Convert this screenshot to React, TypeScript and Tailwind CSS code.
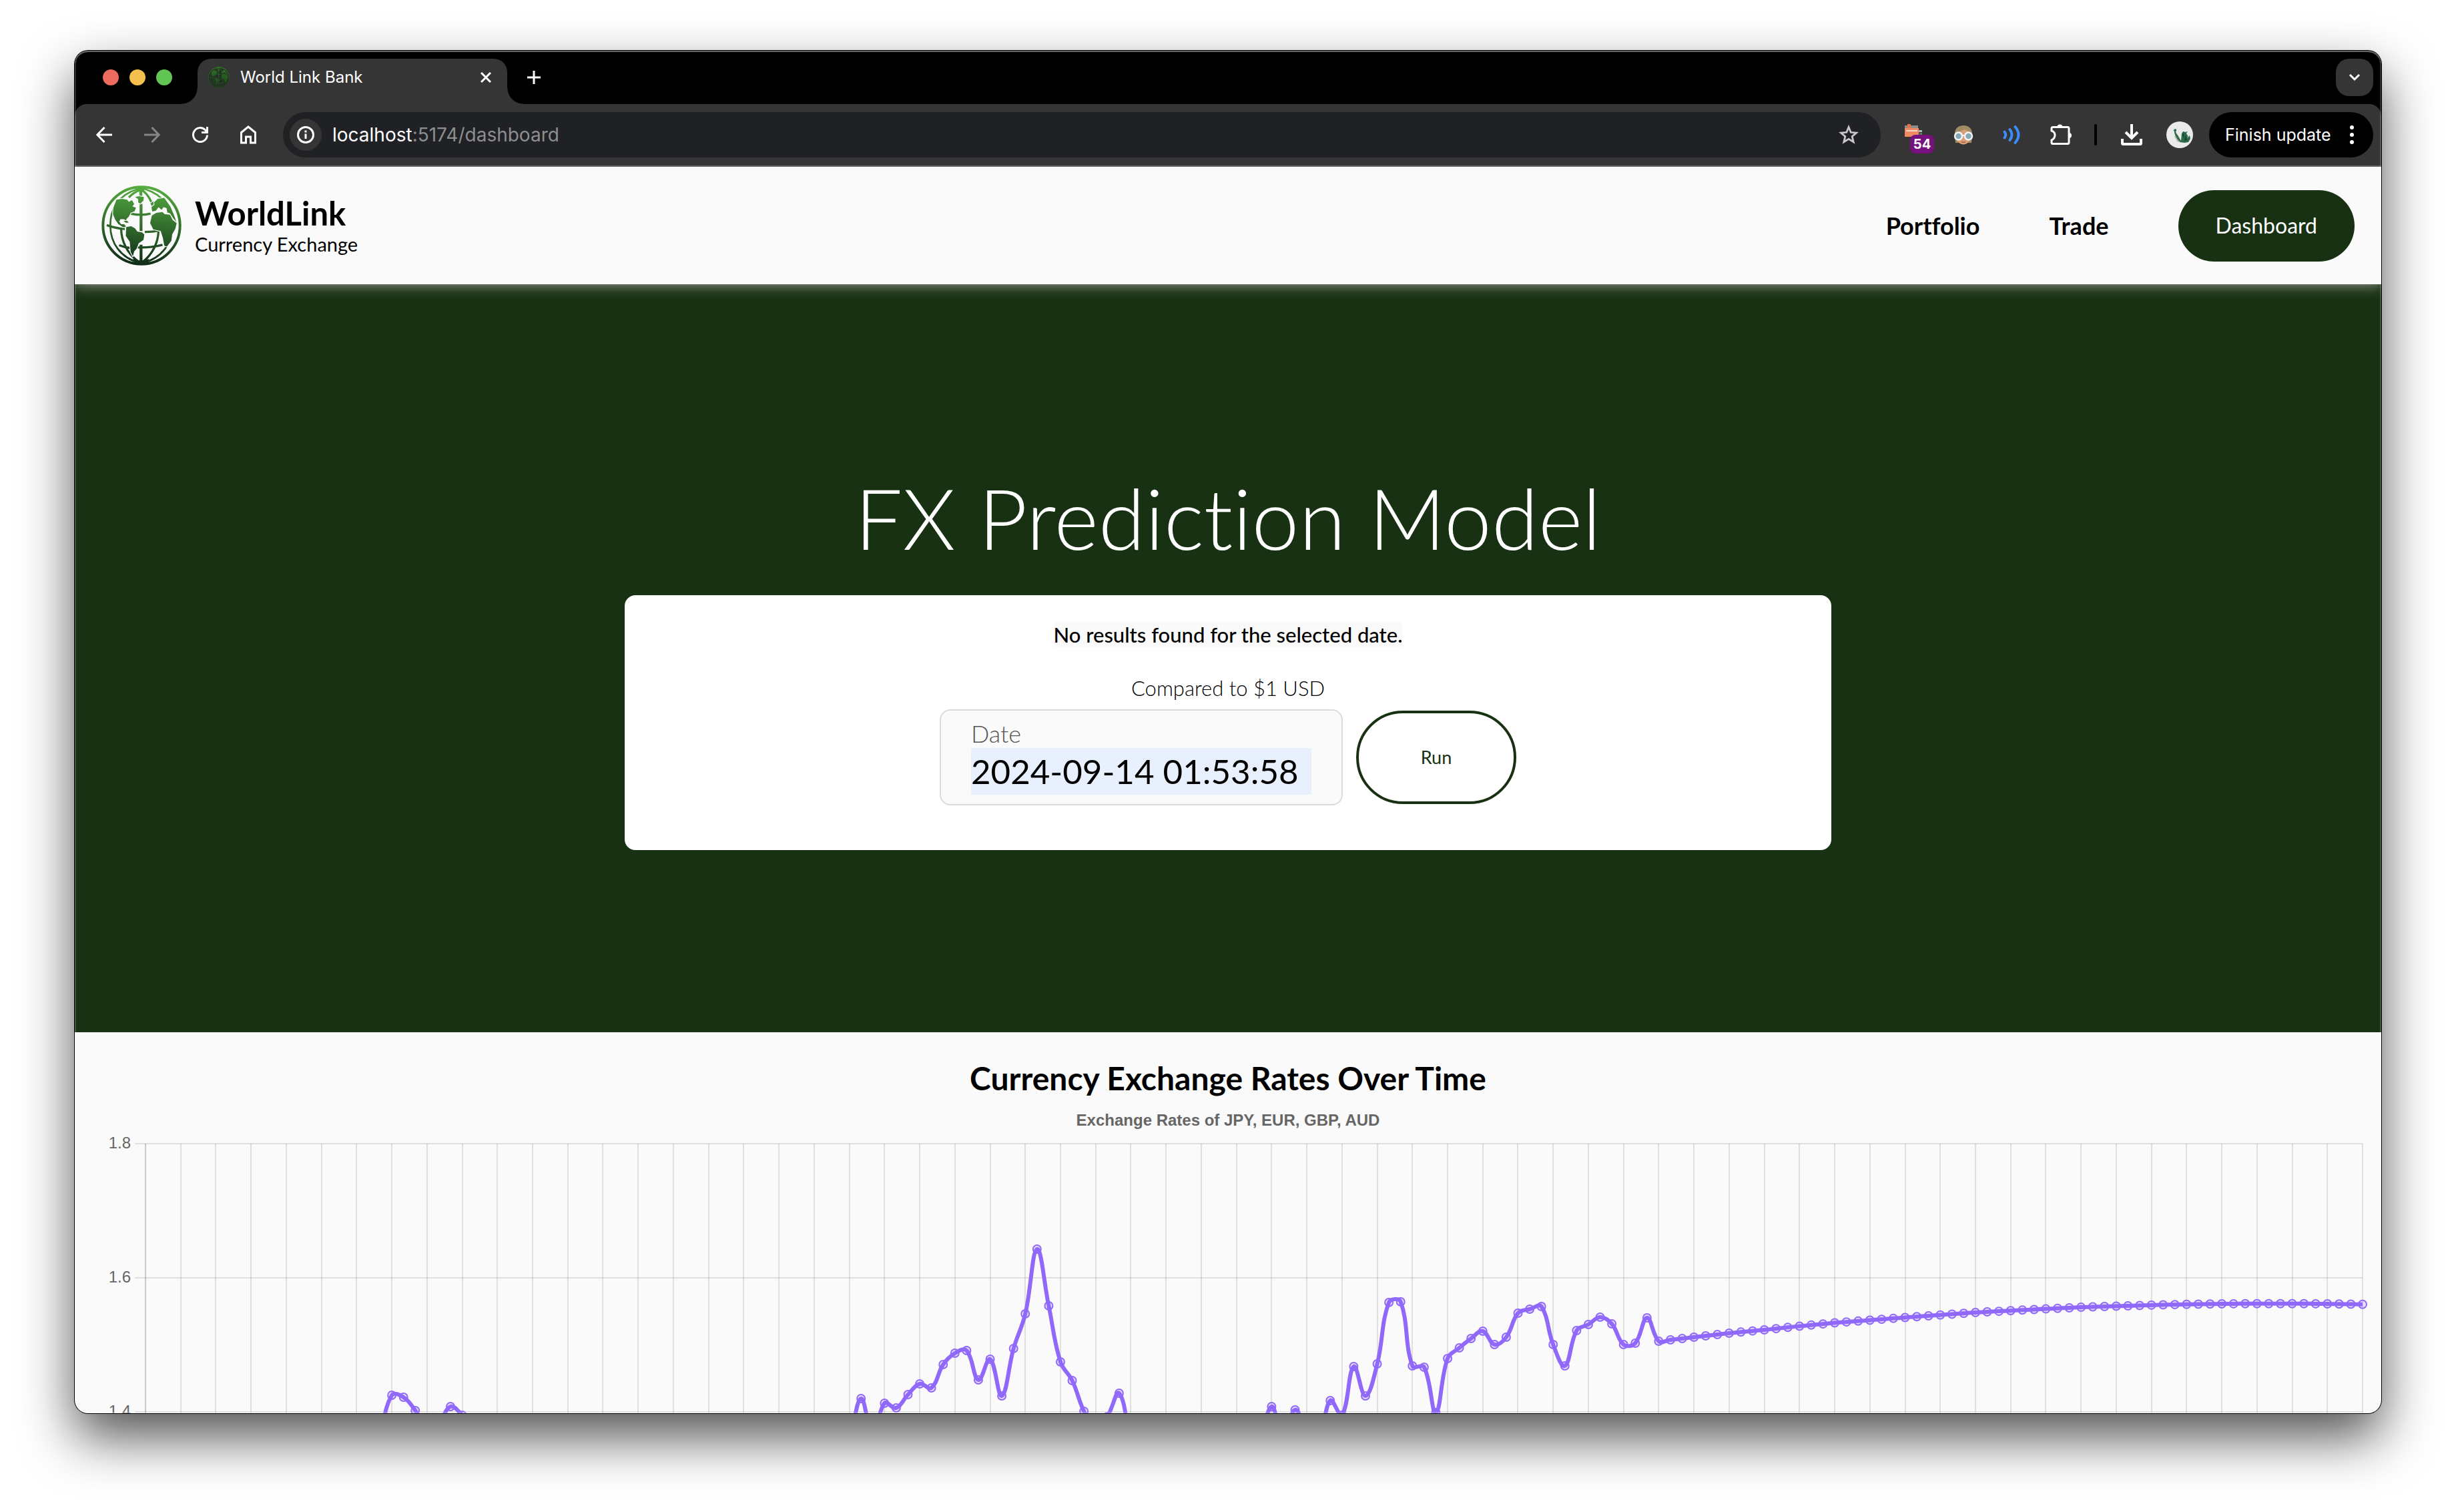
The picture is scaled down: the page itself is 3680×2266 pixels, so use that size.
import { useId } from "react";
import type { ReactNode } from "react";

/* ---------- chart data: [index on the x axis, pixel height of the sample] ---------- */

const POINT_COUNT = 190;
const PLOT_LEFT = 106;
const PLOT_RIGHT = 3428;
const PLOT_TOP = 21;
const STEP = (PLOT_RIGHT - PLOT_LEFT) / (POINT_COUNT - 1);
const TICKS = ["1.8", "1.6", "1.4"];
const TICK_GAP = 201;

const RISES: [number, number][][] = [
  [[19, 530], [20, 460], [21, 398], [22, 401], [23, 421], [24, 450], [25, 440], [26, 415], [27, 428], [28, 450], [29, 500]],
  [
    [59, 520], [60, 470], [61, 403], [62, 458], [63, 410], [64, 417], [65, 397], [66, 381], [67, 387], [68, 352],
    [69, 335], [70, 331], [71, 375], [72, 344], [73, 399], [74, 328], [75, 276], [76, 179], [77, 264], [78, 348],
    [79, 376], [80, 422], [81, 450], [82, 430], [83, 395], [84, 470], [85, 540],
  ],
  [
    [94, 540], [95, 475], [96, 415], [97, 460], [98, 420], [99, 450], [100, 465], [101, 406], [102, 428], [103, 355],
    [104, 399], [105, 351], [106, 259], [107, 258], [108, 354], [109, 356], [110, 424], [111, 343], [112, 327],
    [113, 313], [114, 302], [115, 322], [116, 311], [117, 275], [118, 269], [119, 265], [120, 322], [121, 354],
    [122, 301], [123, 292], [124, 281], [125, 291], [126, 322], [127, 320], [128, 282], [129, 317],
  ],
];

const FORECAST: [number, number][] = [
  [129, 317], [132, 311], [135, 305], [138, 300], [141, 294.5], [144, 289.5], [147, 285.5], [150, 281.5], [153, 277.7],
  [156, 274], [159, 271.2], [162, 268.6], [165, 266.1], [168, 264.5], [171, 262.9], [174, 261.8], [177, 261],
  [180, 260.7], [183, 260.7], [186, 261], [189, 261.8],
];

function densify(rows: [number, number][]): [number, number][] {
  const out: [number, number][] = [];
  for (let k = 0; k < rows.length - 1; k++) {
    const [i0, y0] = rows[k];
    const [i1, y1] = rows[k + 1];
    for (let i = i0 + 1; i <= i1; i++) out.push([i, y0 + ((y1 - y0) * (i - i0)) / (i1 - i0)]);
  }
  return out;
}

const SERIES: [number, number][][] = [RISES[0], RISES[1], [...RISES[2], ...densify(FORECAST)]];

const xOf = (i: number) => PLOT_LEFT + STEP * i;

function smoothPath(rows: [number, number][], tension = 0.4) {
  const p = rows.map(([i, y]) => ({ x: xOf(i), y }));
  const ctl = p.map((cur, k) => {
    const prev = p[k - 1] ?? cur;
    const next = p[k + 1] ?? cur;
    const a = Math.hypot(cur.x - prev.x, cur.y - prev.y);
    const b = Math.hypot(next.x - cur.x, next.y - cur.y);
    const fa = (tension * a) / (a + b || 1);
    const fb = (tension * b) / (a + b || 1);
    const dx = next.x - prev.x;
    const dy = next.y - prev.y;
    return { px: cur.x - fa * dx, py: cur.y - fa * dy, nx: cur.x + fb * dx, ny: cur.y + fb * dy };
  });
  let d = `M${p[0].x.toFixed(1)} ${p[0].y.toFixed(1)}`;
  for (let k = 1; k < p.length; k++) {
    const c0 = ctl[k - 1];
    const c1 = ctl[k];
    d += `C${c0.nx.toFixed(1)} ${c0.ny.toFixed(1)} ${c1.px.toFixed(1)} ${c1.py.toFixed(1)} ${p[k].x.toFixed(1)} ${p[k].y.toFixed(1)}`;
  }
  return d;
}

function RatesChart() {
  const columns = Array.from({ length: 64 }, (_, k) => Math.round(xOf(k * 3)));
  return (
    <svg viewBox="0 0 3456 640" className="block w-full shrink-0" role="img" aria-label="Line chart of exchange rates over time">
      <g fill="none" stroke="#000000" strokeOpacity="0.1" strokeWidth="2">
        {columns.map((x) => (
          <path key={x} d={`M${x} ${PLOT_TOP}V640`} />
        ))}
        <path d={`M${PLOT_LEFT} ${PLOT_TOP}V640`} />
        {TICKS.map((t, k) => (
          <path key={t} d={`M90 ${PLOT_TOP + k * TICK_GAP}H${PLOT_RIGHT}`} />
        ))}
      </g>
      <g className="fill-[#666666] text-2xl [font-family:'Liberation_Sans',Arial,sans-serif]" textAnchor="end">
        {TICKS.map((t, k) => (
          <text key={t} x="84" y={PLOT_TOP + 7 + k * TICK_GAP}>
            {t}
          </text>
        ))}
      </g>
      {SERIES.map((rows, s) => (
        <g key={s} stroke="#9068fa" fill="none">
          <path d={smoothPath(rows)} strokeWidth="6" strokeLinejoin="round" />
          {rows.map(([i, y], k) => (
            <circle key={k} cx={xOf(i)} cy={y} r="6" strokeWidth="2" fill="#9068fa" fillOpacity="0.2" />
          ))}
        </g>
      ))}
    </svg>
  );
}

/* ---------- brand ---------- */

function Globe({ className, top, bottom, gap }: { className: string; top: string; bottom: string; gap: string }) {
  const id = useId();
  const paint = `url(#${id})`;
  return (
    <svg viewBox="36 52 362 362" className={className} aria-hidden="true">
      <defs>
        <linearGradient id={id} gradientUnits="userSpaceOnUse" x1="230" y1="55" x2="205" y2="412">
          <stop offset="0" stopColor={top} />
          <stop offset="1" stopColor={bottom} />
        </linearGradient>
      </defs>
      <circle cx="217" cy="233" r="174" fill={gap} stroke={paint} strokeWidth="12" />
      <g fill="none" stroke={paint} strokeWidth="10">
        <path d="M214 62V108M215 135V258M215 320V408" strokeWidth="13" />
        <path d="M200 68C110 96 76 160 76 232C76 310 120 380 214 404" strokeWidth="8" />
        <path d="M232 68C320 96 358 160 360 232C358 310 310 382 218 404" strokeWidth="8" />
        <path d="M214 70C190 80 172 92 160 106M214 70C236 82 252 104 262 128" />
        <path d="M168 179Q214 190 258 179" />
        <path d="M60 231Q100 246 142 248M232 262Q268 262 300 255" />
        <path d="M125 248C126 300 150 360 206 398" />
        <path d="M294 258C292 310 268 362 222 398" />
        <path d="M116 322Q140 332 166 334M200 332Q262 334 312 320" />
      </g>
      <path d="M190 60L214 56L242 60L218 84H210ZM178 384L214 392L252 384L240 410H192Z" fill={paint} />
      <g fill={paint} stroke={gap} strokeWidth="7" strokeLinejoin="round" paintOrder="stroke">
        <path d="M104 116L128 112L152 116L160 126L174 118L184 136L176 146L192 152L186 168L168 176L160 192L148 204L150 212L138 204L122 204L116 214L124 226L140 228L148 240L132 240L112 226L98 206L88 182L90 152Z" />
        <path d="M188 104L206 100L228 104L226 120L212 134L202 128L202 114Z" />
        <path d="M136 212L152 212L160 220L146 220Z" />
        <path d="M148 240L170 236L188 246L198 260L220 264L230 274L226 298L204 314L196 336L184 350L178 372L168 352L164 306L146 280Z" />
        <path d="M264 188L284 176L312 172L322 182L346 184L358 208L376 222L370 248L356 272L352 302L332 328L320 324L314 290L304 258L270 250L256 222Z" />
        <path d="M262 152L272 130L290 112L320 108L348 148L368 196L374 216L362 202L346 178L334 174L330 154L316 150L308 162L294 150L282 166L266 170Z" />
        <path d="M258 132L270 124L272 138L262 144Z" />
      </g>
    </svg>
  );
}

/* ---------- browser chrome ---------- */

function IconButton({ label, className = "", children }: { label: string; className?: string; children: ReactNode }) {
  return (
    <button type="button" aria-label={label} className={`flex size-12 shrink-0 items-center justify-center ${className}`}>
      {children}
    </button>
  );
}

function TabStrip() {
  return (
    <div className="flex h-20 shrink-0 items-center bg-black pr-3 pl-[42px]">
      <div className="flex gap-4">
        <button type="button" aria-label="Close window" className="size-6 rounded-full bg-[#ec6a5e]" />
        <button type="button" aria-label="Minimize window" className="size-6 rounded-full bg-[#f4bf4f]" />
        <button type="button" aria-label="Zoom window" className="size-6 rounded-full bg-[#61c554]" />
      </div>
      <div className="relative ml-[38px] flex h-[68px] w-[464px] items-center self-end rounded-t-[20px] bg-[#353535] pr-6 pb-3 pl-4">
        <span className="absolute bottom-0 -left-6 size-6 bg-[radial-gradient(circle_at_0_0,transparent_23px,#353535_24px)]" />
        <span className="absolute -right-6 bottom-0 size-6 bg-[radial-gradient(circle_at_100%_0,transparent_23px,#353535_24px)]" />
        <Globe className="size-8" top="#2f7526" bottom="#1d3d1f" gap="#232d22" />
        <span className="ml-4 flex-1 text-2xl leading-7 text-white">World Link Bank</span>
        <button type="button" aria-label="Close tab">
          <svg viewBox="0 0 16 16" className="size-4" fill="none" stroke="#fff" strokeWidth="3">
            <path d="M1 1L15 15M15 1L1 15" />
          </svg>
        </button>
      </div>
      <button type="button" aria-label="New tab" className="ml-[30px]">
        <svg viewBox="0 0 20 20" className="size-5" fill="none" stroke="#fff" strokeWidth="3">
          <path d="M10 0V20M0 10H20" />
        </svg>
      </button>
      <button type="button" aria-label="Search tabs" className="ml-auto flex size-14 items-center justify-center rounded-[20px] bg-[#353535]">
        <svg viewBox="0 0 18 12" className="h-3 w-[18px]" fill="none" stroke="#fff" strokeWidth="3">
          <path d="M2 2L9 9L16 2" />
        </svg>
      </button>
    </div>
  );
}

function Toolbar() {
  return (
    <div className="shrink-0 bg-black">
      <div className="flex h-[94px] items-center rounded-t-[18px] border-b-2 border-[#676767] bg-[#353535] pr-3 pl-5">
        <div className="flex gap-6">
          <IconButton label="Back">
            <svg viewBox="0 0 24 24" className="size-6" fill="none" stroke="#fff" strokeWidth="3">
              <path d="M24 12H2M12.500 1L1.800 12L12.500 23" />
            </svg>
          </IconButton>
          <IconButton label="Forward">
            <svg viewBox="0 0 24 24" className="size-6" fill="none" stroke="#868686" strokeWidth="3">
              <path d="M0 12H22M11.500 1L22.200 12L11.500 23" />
            </svg>
          </IconButton>
          <IconButton label="Reload">
            <svg viewBox="0 0 24 24" className="size-6" fill="none" stroke="#fff" strokeWidth="3">
              <path d="M22.500 12.500A10.500 10.500 0 1 1 19.500 4.700L22 7.500M22.500 0V8.500H14" />
            </svg>
          </IconButton>
          <IconButton label="Home">
            <svg viewBox="0 0 24 28" className="h-7 w-6" fill="none" stroke="#fff" strokeWidth="3">
              <path d="M1.500 26V10.500L12 2L22.500 10.500V26H15.500V17H8.500V26Z" />
            </svg>
          </IconButton>
        </div>
        <div className="ml-7 flex h-[68px] flex-1 items-center rounded-full bg-[#202125] pr-[33px] pl-[10px]">
          <IconButton label="View site information" className="rounded-full bg-[#353535]">
            <svg viewBox="0 0 26 26" className="size-[26px]" fill="none" stroke="#fff" strokeWidth="3">
              <circle cx="13" cy="13" r="11.500" />
              <path d="M13 11.500V19M13 6.500V9.500" />
            </svg>
          </IconButton>
          <div className="ml-4 flex-1 text-[28px] leading-9 text-[#8d8e90]">
            <span className="text-white">localhost</span>:5174/dashboard
          </div>
          <button type="button" aria-label="Bookmark this tab">
            <svg viewBox="0 0 30 30" className="size-[30px]" fill="none" stroke="#c7c8ca" strokeWidth="2.800">
              <path d="M15 3.500L18.200 11.300L26.600 12L20.200 17.500L22.200 25.700L15 21.300L7.800 25.700L9.800 17.500L3.400 12L11.800 11.300Z" />
            </svg>
          </button>
        </div>

        <button type="button" aria-label="Tab manager, 54 tabs" className="relative ml-8 h-12 w-12 shrink-0">
          <svg viewBox="0 0 48 48" className="size-12" aria-hidden="true">
            <path d="M4 10H24V14H4Z" fill="#8d8d8d" />
            <path d="M8 8H13V14H8Z" fill="#e8704a" />
            <path d="M4 14H25V27H4Z" fill="#ef8a63" />
            <path d="M6 17H23V19H6Z" fill="#f8d8c8" />
            <path d="M25 17H30V20H25Z" fill="#a9b9ad" />
            <path d="M26 21H30V24H26Z" fill="#5c7a66" />
          </svg>
          <span className="absolute top-6 left-3 flex h-7 w-9 items-center justify-center rounded-lg bg-[#76127e] text-xl leading-7 font-bold text-white">
            54
          </span>
        </button>
        <IconButton label="Reader extension" className="ml-5">
          <svg viewBox="0 0 32 32" className="size-8">
            <path d="M3 17C2 7 8 2 16 2S30 7 29 17L28 28H4Z" fill="#a08b62" />
            <path d="M5 16C6 12 10 11 18 8C22 10 26 12 27 16C27 25 22 30.500 16 30.500S5 25 5 16Z" fill="#d9a077" />
            <circle cx="8.500" cy="18" r="5.500" fill="#86a9b8" stroke="#f4f7f8" strokeWidth="2.400" />
            <circle cx="23.500" cy="18" r="5.500" fill="#86a9b8" stroke="#f4f7f8" strokeWidth="2.400" />
            <path d="M14 17H18" stroke="#f4f7f8" strokeWidth="2" />
            <path d="M13 26.500Q16 28 19 26.500" fill="none" stroke="#a8633f" strokeWidth="1.500" />
          </svg>
        </IconButton>
        <IconButton label="Read aloud extension" className="ml-6">
          <svg viewBox="0 0 26 28" className="h-7 w-[26px]" fill="none" stroke="#3b8cf5" strokeWidth="4" strokeLinecap="round">
            <path d="M2.500 9.500Q6 14 2.500 18.500M10.500 6Q16.500 14 10.500 22M18.500 2Q28.500 14 18.500 26" />
          </svg>
        </IconButton>
        <IconButton label="Extensions" className="ml-[26px]">
          <svg viewBox="0 0 32 32" className="size-8">
            <path
              d="M2 9V6.500Q2 4.500 4 4.500H26Q28 4.500 28 6.500V27.500Q28 29.500 26 29.500H4Q2 29.500 2 27.500V24Q7 21.500 7 16.500T2 10Z"
              fill="none"
              stroke="#fff"
              strokeWidth="3"
            />
            <path d="M10.500 4.500A4 4 0 0 1 18.500 4.500ZM28 13A4 4 0 0 1 28 21Z" fill="#fff" />
          </svg>
        </IconButton>
        <span className="ml-[26px] h-8 w-1 shrink-0 rounded-sm bg-black" />
        <IconButton label="Downloads" className="ml-7">
          <svg viewBox="0 0 32 32" className="size-8" fill="none" stroke="#fff" strokeWidth="4">
            <path d="M16 0V21M7 12L16 21L25 12M2 22V28.500Q2 30 3.500 30H28.500Q30 30 30 28.500V22" />
          </svg>
        </IconButton>
        <button type="button" aria-label="Profile" className="ml-7 size-10 shrink-0">
          <svg viewBox="0 0 40 40" className="size-10">
            <circle cx="20" cy="20" r="20" fill="#e9eae9" />
            <path d="M12 22L15 21L18 27L22 32L16 30Z" fill="#b4bab5" />
            <path
              d="M10.500 14L12 11.500L15 11.500L15 14L14 15.500C14.500 18 17 20 19 24L22 29L23 18L25 15L29 16L32 14.500L30 18L32.500 22L31 25L35 21L36 26L33 31L27 32L21 31C17 28 15 24 13 20C12 18 12 16 12 14.500Z"
              fill="#2c6a49"
            />
            <path d="M24 20L26 17L27 26ZM29 21L31 28L27 29Z" fill="#174630" />
          </svg>
        </button>
        <button
          type="button"
          className="ml-6 flex h-[68px] w-[246px] shrink-0 items-center justify-between rounded-full bg-black pr-[29px] pl-6 text-[25px] leading-8 whitespace-nowrap text-white"
        >
          Finish update
          <svg viewBox="0 0 6 28" className="h-7 w-[6px]" fill="#fff">
            <circle cx="3" cy="3" r="3" />
            <circle cx="3" cy="14" r="3" />
            <circle cx="3" cy="25" r="3" />
          </svg>
        </button>
      </div>
    </div>
  );
}

/* ---------- page ---------- */

function SiteHeader() {
  return (
    <header className="relative z-10 flex h-44 shrink-0 items-center justify-between bg-[#fafafa] px-10 shadow-[0_0_20px_#aaaaaa]">
      <a href="#home" className="flex items-center gap-5">
        <Globe className="size-[120px]" top="#55ad40" bottom="#0f2b18" gap="#fafafa" />
        <span className="flex flex-col">
          <span className="text-[49px] leading-[56px] font-bold">WorldLink</span>
          <span className="text-[29px] leading-[38px]">Currency Exchange</span>
        </span>
      </a>
      <nav className="flex items-center gap-[104px] text-4xl font-bold">
        <a href="#portfolio">Portfolio</a>
        <a href="#trade">Trade</a>
        <a href="#dashboard" className="flex h-[107px] items-center rounded-full bg-[#183112] px-14 text-[32px] font-normal text-white">
          Dashboard
        </a>
      </nav>
    </header>
  );
}

function Hero() {
  return (
    <section className="flex shrink-0 flex-col items-center bg-[#183112] pt-[272px] pb-[273px]">
      <h1 className="mb-10 text-[127px] leading-[154px] font-light text-white">FX Prediction Model</h1>
      <div className="flex w-full max-w-[1808px] flex-col items-center rounded-2xl bg-white pt-10 pb-[67px]">
        <p className="bg-[#fafafa] text-[31px] leading-[38px] font-medium">No results found for the selected date.</p>
        <p className="mt-[42px] text-[31px] leading-[38px] font-light">Compared to $1 USD</p>
        <form className="mt-[13px] flex items-center gap-5" onSubmit={(e) => e.preventDefault()}>
          <div className="flex flex-col rounded-2xl border-2 border-[#dbdbdb] bg-[#fafafa] px-[45px] pt-[13px] pb-[14px]">
            <label htmlFor="date" className="text-4xl leading-[43px] font-light text-[#555555]">
              Date
            </label>
            <input id="date" type="text" defaultValue="2024-09-14 01:53:58" className="h-[70px] w-[510px] bg-[#e8effd] text-[51px] outline-none" />
          </div>
          <button type="submit" className="h-[140px] w-60 rounded-full border-4 border-[#183112] text-[27px] text-[#183112]">
            Run
          </button>
        </form>
      </div>
    </section>
  );
}

export default function App() {
  return (
    <div className="flex h-screen flex-col bg-white px-28 pt-[76px] pb-[148px]">
      <div className="relative flex min-h-0 flex-1 flex-col overflow-hidden rounded-[20px] bg-[#fafafa] shadow-[0_0_0_1px_#000000,0_36px_80px_rgba(0,0,0,0.68)]">
        <div className="shrink-0 [font-family:Inter,sans-serif]">
          <TabStrip />
          <Toolbar />
        </div>
        <main className="flex min-h-0 flex-1 flex-col overflow-hidden text-black [font-family:Lato,sans-serif] [font-variant-ligatures:none]">
          <SiteHeader />
          <Hero />
          <section className="flex shrink-0 flex-col items-center pt-10">
            <h2 className="text-5xl leading-[58px] font-bold">Currency Exchange Rates Over Time</h2>
            <p className="mt-5 text-2xl leading-7 font-bold text-[#666666] [font-family:'Liberation_Sans',Arial,sans-serif]">
              Exchange Rates of JPY, EUR, GBP, AUD
            </p>
            <RatesChart />
          </section>
        </main>
        <div className="pointer-events-none absolute inset-0 rounded-[20px] shadow-[inset_0_2px_0_#666666,inset_0_0_0_2px_rgba(255,255,255,0.18)]" />
      </div>
    </div>
  );
}
